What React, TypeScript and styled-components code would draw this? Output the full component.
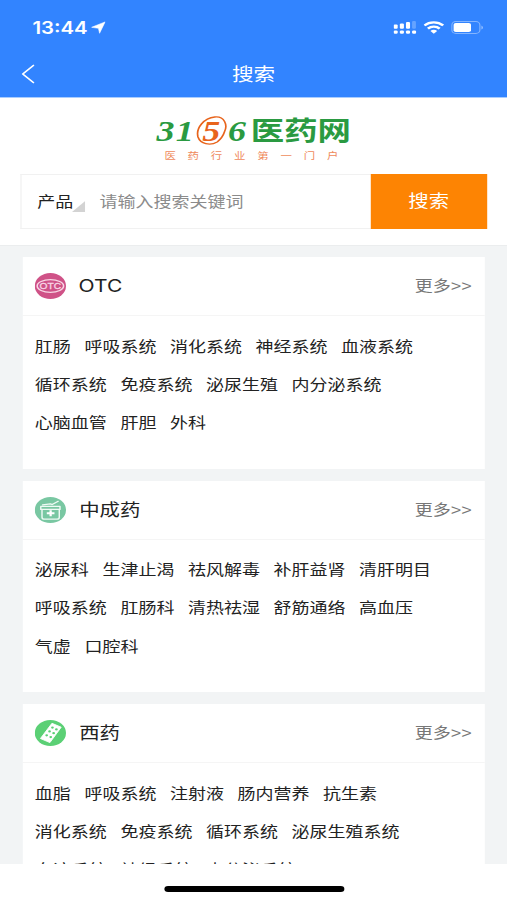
import React from "react";
import styled, { createGlobalStyle } from "styled-components";

const STRETCH = 1.2;

const GlobalStyle = createGlobalStyle`
  * { box-sizing: border-box; }
  html, body { margin: 0; padding: 0; background: #fff; }
  body { width: 507px; height: 900px; overflow: hidden; }
`;

/* The type is wide-set: the whole screen is laid out narrow and stretched sideways. */
const Screen = styled.div`
  width: ${507 / STRETCH}px;
  height: 900px;
  transform: scaleX(${STRETCH});
  transform-origin: 0 0;
  display: flex;
  flex-direction: column;
  overflow: hidden;
  background: #fff;
  color: #222;
  font-family: "Noto Sans CJK SC", "Liberation Sans", sans-serif;
`;

const TopBar = styled.header`
  flex: none;
  height: 98px;
  background: #3284ff;
  border-bottom: 1px solid #a9cdff;
  color: #fff;
`;

const StatusBar = styled.div`
  height: 51px;
  padding: 4px 20px 0 27px;
  display: flex;
  align-items: center;
  justify-content: space-between;
`;

const Clock = styled.div`
  display: flex;
  align-items: center;
  gap: 3px;
  font: 600 17px/20px Inter, sans-serif;
`;

const Indicators = styled.div`
  display: flex;
  align-items: center;
  gap: 6px;
`;

const NavBar = styled.div`
  height: 46px;
  padding: 0 18px 1px;
  display: grid;
  grid-template-columns: 13px 1fr 13px;
  align-items: center;
`;

const NavTitle = styled.h1`
  margin: 0 0 2px;
  text-align: center;
  font-size: 18px;
  line-height: 24px;
  font-weight: 400;
`;

const SearchPanel = styled.section`
  flex: none;
  height: 148px;
  border-bottom: 1px solid #ebedee;
  padding: 15px 16.5px 0 17px;
`;

const Logo = styled.div`
  width: 163px;
  height: 61px;
  margin-left: 113px;
`;

const LogoLine = styled.div`
  height: 36px;
  display: flex;
  align-items: center;
`;

const Digit = styled.span<{ $w: number; $accent?: boolean }>`
  width: ${(p) => p.$w}px;
  text-align: center;
  position: relative;
  font: italic 700 30px/32px "Liberation Serif", serif;
  color: ${(p) => (p.$accent ? "#e8641c" : "#2a9a41")};
`;

const Ring = styled.svg`
  position: absolute;
  left: 1px;
  top: 0;
`;

const Brand = styled.span`
  margin: -5px 0 0 4px;
  font-size: 26px;
  line-height: 34px;
  font-weight: 700;
  color: #2a9a41;
  transform: scaleX(1.07);
  transform-origin: 0 50%;
`;

const Tagline = styled.div`
  display: flex;
  justify-content: space-between;
  width: 145px;
  margin-left: 7px;
  font-size: 9.5px;
  line-height: 12px;
  color: #ef8a5c;
`;

const SearchRow = styled.div`
  display: flex;
  height: 55px;
`;

const Field = styled.div`
  flex: 1;
  display: flex;
  align-items: center;
  border: 1px solid #f1f1f1;
  border-right: 0;
  padding: 0 0 2px 13px;
  font-size: 15px;
`;

const Corner = styled.svg`
  margin: 12px 12px 0 -1px;
`;

const Placeholder = styled.span`
  color: #8b8b8b;
`;

const SearchButton = styled.button`
  width: 97.5px;
  border: 0;
  padding: 0 0 3px;
  background: #fd8403;
  color: #fff;
  font: 400 17px/24px "Noto Sans CJK SC", sans-serif;
`;

const Feed = styled.main`
  flex: none;
  height: 618px;
  overflow: hidden;
  background: #f2f4f5;
  padding: 11px 18.3px 0 19px;
  display: flex;
  flex-direction: column;
  gap: 12px;
`;

const Card = styled.section`
  flex: none;
  height: 211.6px;
  background: #fff;
`;

const CardHead = styled.div`
  height: 59px;
  border-bottom: 1px solid #f5f5f5;
  padding: 0 11px 0 10px;
  display: flex;
  align-items: center;
`;

const CardTitle = styled.h2<{ $latin?: boolean }>`
  flex: 1;
  margin: ${(p) => (p.$latin ? "0 0 0 10.5px" : "-2px 0 0 11px")};
  font-size: ${(p) => (p.$latin ? 17.5 : 17)}px;
  line-height: 24px;
  font-weight: 400;
  font-family: ${(p) => (p.$latin ? "Inter, " : "")}"Noto Sans CJK SC", sans-serif;
`;

const More = styled.a`
  font-size: 15px;
  line-height: 22px;
  color: #777;
  font-family: "Liberation Sans", "Noto Sans CJK SC", sans-serif;
`;

const Tags = styled.div`
  padding: 10.5px 10px 0;
`;

const TagRow = styled.div`
  display: flex;
  gap: 11.3px;
  height: 38.3px;
  font-size: 15px;
  line-height: 38.3px;
  white-space: nowrap;
`;

const HomeArea = styled.footer`
  flex: 1;
  display: flex;
  justify-content: center;
  padding: 22px 0 0 1px;
`;

const HomeBar = styled.div`
  width: 150px;
  height: 6px;
  border-radius: 3px;
  background: #000;
`;

const OtcIcon = () => (
  <svg width="26" height="26" viewBox="0 0 26 26">
    <circle cx="13" cy="13" r="13" fill="#cf5287" />
    <ellipse cx="13" cy="13" rx="11" ry="6.3" fill="none" stroke="#f8d6e5" strokeWidth="1.3" />
    <text x="13" y="16.3" textAnchor="middle" fontFamily="Liberation Sans" fontSize="9.2" fill="#f8d6e5" stroke="#f8d6e5" strokeWidth=".3" textLength="18" lengthAdjust="spacingAndGlyphs">OTC</text>
  </svg>
);

const KitIcon = () => (
  <svg width="26" height="26" viewBox="0 0 26 26">
    <circle cx="13" cy="13" r="13" fill="#79c7a2" />
    <g fill="none" stroke="#eefaf4" strokeWidth="1.2" strokeLinejoin="round" strokeLinecap="round">
      <path d="M5 9.4h16v3H5z" />
      <path d="M6 12.5v7.7a2 2 0 0 0 2 2h10.400a2 2 0 0 0 2-2v-7.700" />
      <path d="M6.5 7.800l6.500-1 1.500.8 5-3.300" />
    </g>
    <path d="M13.200 13.300v6M10 16.300h6.400" stroke="#fff" strokeWidth="1.900" />
  </svg>
);

const PillIcon = () => (
  <svg width="26" height="26" viewBox="0 0 26 26">
    <circle cx="13" cy="13" r="13" fill="#5bd075" />
    <path d="M14.300 3.300 22 7.200 12.600 22.600 4.700 18.500z" fill="#fff" stroke="#fff" strokeWidth=".8" strokeLinejoin="round" />
    <g fill="#5bd075">
      <circle cx="14.700" cy="7.600" r="1.150" />
      <circle cx="18" cy="9.400" r="1.150" />
      <circle cx="12.300" cy="11.400" r="1.150" />
      <circle cx="15.700" cy="13.200" r="1.150" />
      <circle cx="9.900" cy="15.300" r="1.150" />
      <circle cx="13.300" cy="17.100" r="1.150" />
    </g>
  </svg>
);

const sections = [
  {
    title: "OTC",
    latin: true,
    icon: <OtcIcon />,
    rows: [
      ["肛肠", "呼吸系统", "消化系统", "神经系统", "血液系统"],
      ["循环系统", "免疫系统", "泌尿生殖", "内分泌系统"],
      ["心脑血管", "肝胆", "外科"],
    ],
  },
  {
    title: "中成药",
    icon: <KitIcon />,
    rows: [
      ["泌尿科", "生津止渴", "祛风解毒", "补肝益肾", "清肝明目"],
      ["呼吸系统", "肛肠科", "清热祛湿", "舒筋通络", "高血压"],
      ["气虚", "口腔科"],
    ],
  },
  {
    title: "西药",
    icon: <PillIcon />,
    rows: [
      ["血脂", "呼吸系统", "注射液", "肠内营养", "抗生素"],
      ["消化系统", "免疫系统", "循环系统", "泌尿生殖系统"],
      ["血液系统", "神经系统", "内分泌系统"],
    ],
  },
];

export default function App() {
  return (
    <>
      <GlobalStyle />
      <Screen>
        <TopBar>
          <StatusBar>
            <Clock>
              13:44
              <svg width="12" height="13" viewBox="0 0 12 13">
                <path d="M11.600.9 7 12.300 6 7.300.3 6.300z" fill="#fff" stroke="#fff" strokeWidth=".5" />
              </svg>
            </Clock>
            <Indicators>
              <svg width="19" height="13" viewBox="0 0 19 13" fill="#fff">
                <rect x="0" y="3.6" width="3.4" height="4.2" rx="1" />
                <rect x="5.2" y="2.6" width="3.4" height="5.2" rx="1" />
                <rect x="10.3" y="1" width="3.4" height="6.8" rx="1" />
                <rect x="15.4" y="0" width="3.2" height="7.8" rx="1" opacity=".25" />
                <rect x="0" y="9.4" width="3.4" height="3.4" rx="1.2" />
                <rect x="5.2" y="9.4" width="3.4" height="3.4" rx="1.2" />
                <rect x="10.3" y="9.4" width="3.4" height="3.4" rx="1.2" />
                <rect x="15.4" y="9.4" width="3.4" height="3.4" rx="1.2" />
              </svg>
              <svg width="17" height="13" viewBox="0 0 17 13" fill="none" stroke="#fff" strokeWidth="2.3">
                <path d="M.7 4.5a11.2 11.2 0 0 1 15.6 0" />
                <path d="M3.6 7.6a7 7 0 0 1 9.8 0" />
                <path d="M8.5 12.8 5.700 10a3.8 3.8 0 0 1 5.600 0z" fill="#fff" stroke="none" />
              </svg>
              <svg width="27" height="13" viewBox="0 0 27 13">
                <rect x=".5" y=".5" width="23.4" height="12" rx="3.4" fill="none" stroke="#fff" strokeOpacity=".4" />
                <rect x="2" y="2" width="14.5" height="9" rx="1.8" fill="#fff" />
                <path d="M25.2 4.4c1.7.8 1.7 3.4 0 4.2z" fill="#fff" fillOpacity=".5" />
              </svg>
            </Indicators>
          </StatusBar>
          <NavBar>
            <svg width="11" height="20" viewBox="0 0 11 20">
              <path d="M10.3 1 1 10l9.3 9" fill="none" stroke="#fff" strokeWidth="1.5" />
            </svg>
            <NavTitle>搜索</NavTitle>
          </NavBar>
        </TopBar>

        <SearchPanel>
          <Logo>
            <LogoLine>
              <Digit $w={16}>3</Digit>
              <Digit $w={16}>1</Digit>
              <Digit $w={28} $accent>
                5
                <Ring width="27" height="31" viewBox="0 0 27 31">
                  <path d="M18 27C12 31 4 29 2 22 0 13 7 3 16 2c8-1 11 8 8 15-1 4-3 7-6 10" fill="none" stroke="#e8641c" strokeWidth="1.4" />
                </Ring>
              </Digit>
              <Digit $w={15}>6</Digit>
              <Brand>医药网</Brand>
            </LogoLine>
            <Tagline>
              {Array.from("医药行业第一门户").map((c) => (
                <span key={c}>{c}</span>
              ))}
            </Tagline>
          </Logo>
          <SearchRow>
            <Field>
              产品
              <Corner width="11" height="11" viewBox="0 0 11 11">
                <path d="M11 0v11H0z" fill="#d3d3d3" />
              </Corner>
              <Placeholder>请输入搜索关键词</Placeholder>
            </Field>
            <SearchButton>搜索</SearchButton>
          </SearchRow>
        </SearchPanel>

        <Feed>
          {sections.map((s) => (
            <Card key={s.title}>
              <CardHead>
                {s.icon}
                <CardTitle $latin={s.latin}>{s.title}</CardTitle>
                <More>更多&gt;&gt;</More>
              </CardHead>
              <Tags>
                {s.rows.map((row, i) => (
                  <TagRow key={i}>
                    {row.map((t) => (
                      <span key={t}>{t}</span>
                    ))}
                  </TagRow>
                ))}
              </Tags>
            </Card>
          ))}
        </Feed>

        <HomeArea>
          <HomeBar />
        </HomeArea>
      </Screen>
    </>
  );
}
